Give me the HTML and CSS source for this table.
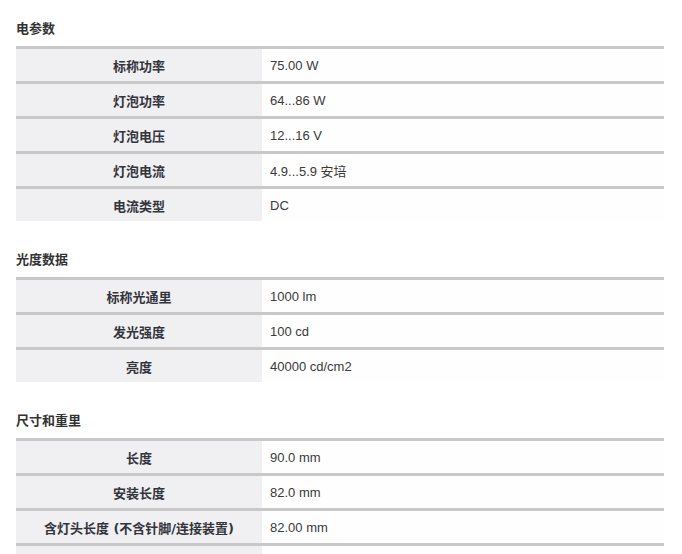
FILE: index.html
```html
<!DOCTYPE html>
<html lang="zh">
<head>
<meta charset="utf-8">
<link rel="stylesheet" href="styles.css">
</head>
<body>
<div class="page">
  <section class="sect">
    <h2 class="sect-title">电参数</h2>
    <div class="spec">
      <div class="row"><div class="label">标称功率</div><div class="value">75.00 W</div></div>
      <div class="row"><div class="label">灯泡功率</div><div class="value">64...86 W</div></div>
      <div class="row"><div class="label">灯泡电压</div><div class="value">12...16 V</div></div>
      <div class="row"><div class="label">灯泡电流</div><div class="value">4.9...5.9 安培</div></div>
      <div class="row"><div class="label">电流类型</div><div class="value">DC</div></div>
    </div>
  </section>
  <section class="sect">
    <h2 class="sect-title">光度数据</h2>
    <div class="spec">
      <div class="row"><div class="label">标称光通里</div><div class="value">1000 lm</div></div>
      <div class="row"><div class="label">发光强度</div><div class="value">100 cd</div></div>
      <div class="row"><div class="label">亮度</div><div class="value">40000 cd/cm2</div></div>
    </div>
  </section>
  <section class="sect">
    <h2 class="sect-title">尺寸和重里</h2>
    <div class="spec">
      <div class="row"><div class="label">长度</div><div class="value">90.0 mm</div></div>
      <div class="row"><div class="label">安装长度</div><div class="value">82.0 mm</div></div>
      <div class="row"><div class="label">含灯头长度 (不含针脚/连接装置)</div><div class="value">82.00 mm</div></div>
      <div class="row"><div class="label">&nbsp;</div><div class="value">&nbsp;</div></div>
    </div>
  </section>
</div>
</body>
</html>
```
FILE: styles.css
```css
html, body {
  margin: 0;
  padding: 0;
  background: #ffffff;
}
body {
  font-family: "Liberation Sans", "Noto Sans CJK SC", sans-serif;
  font-size: 13px;
  color: #333333;
  overflow: hidden;
  height: 554px;
}
.page {
  padding: 19px 18px 0 16px;
}
.sect + .sect {
  margin-top: 29px;
}
.sect-title {
  margin: 0 0 7px 0;
  font-size: 13px;
  line-height: 20px;
  font-weight: bold;
  color: #333;
}
.spec {
  display: flex;
  flex-direction: column;
}
.row {
  display: grid;
  grid-template-columns: 246px 1fr;
  border-top: 3px solid #c8c8c8;
  height: 32px;
}
.label {
  background: #f0f0f2;
  display: flex;
  align-items: center;
  justify-content: center;
  font-family: "DejaVu Sans", "Noto Sans CJK SC", sans-serif;
  font-weight: bold;
  color: #34343c;
}
.value {
  background: #fefefe;
  display: flex;
  align-items: center;
  padding-left: 8px;
  color: #3a3a3a;
}
```
